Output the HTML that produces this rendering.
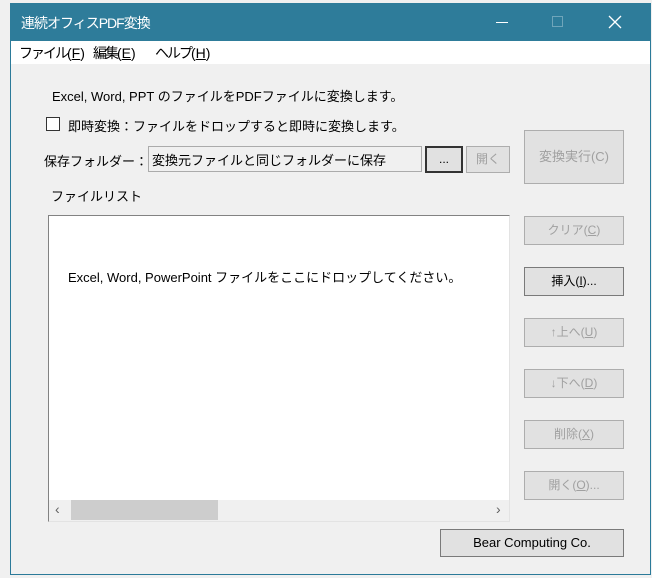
<!DOCTYPE html>
<html><head><meta charset="utf-8"><style>
*{box-sizing:border-box;margin:0;padding:0}
body{width:652px;height:578px;background:#f0f0f0;position:relative;overflow:hidden;font-family:"Liberation Sans","Noto Sans CJK JP",sans-serif;font-size:13px;color:#000}
.a{position:absolute;white-space:nowrap}
.win{position:absolute;left:10px;top:3px;width:641px;height:572px;border:1px solid #2b7a99;background:#f0f0f0}
.title{position:absolute;left:10px;top:3px;width:641px;height:38px;background:#2e7c9a;color:#fff;font-size:14px}
.menu{position:absolute;left:11px;top:41px;width:639px;height:23px;background:#fff;font-size:14px}
.menu i{font-style:normal;letter-spacing:-2px}
.btn{position:absolute;background:#e1e1e1;border:1px solid #adadad;text-align:center;color:#a0a0a0;font-size:12px}
.en{color:#000;border-color:#7a7a7a}
</style></head><body>
<div class="win"></div>
<div class="title">
 <div class="a" style="left:11px;top:10px;letter-spacing:-1px">連続オフィスPDF変換</div>
 <div class="a" style="left:486px;top:19px;width:12px;height:1px;background:#fff"></div>
 <div class="a" style="left:542px;top:13px;width:11px;height:11px;border:1px solid #6fa5ba"></div>
 <svg class="a" style="left:598px;top:12px" width="14" height="14"><path d="M1 1L13 13M13 1L1 13" stroke="#fff" stroke-width="1.3"/></svg>
</div>
<div class="menu">
 <span class="a" style="left:8px;top:2px"><i>ファイル</i>(<u>F</u>)</span>
 <span class="a" style="left:82px;top:2px"><i>編集</i>(<u>E</u>)</span>
 <span class="a" style="left:144px;top:2px"><i>ヘルプ</i>(<u>H</u>)</span>
</div>
<div class="a" style="left:52px;top:86px">Excel, Word, PPT のファイルをPDFファイルに変換します。</div>
<div class="a" style="left:46px;top:117px;width:14px;height:14px;background:#fff;border:1px solid #333"></div>
<div class="a" style="left:68px;top:116px">即時変換：ファイルをドロップすると即時に変換します。</div>
<div class="a" style="left:44px;top:151px">保存フォルダー：</div>
<div class="a" style="left:148px;top:146px;width:274px;height:26px;border:1px solid #ababab;background:#f0f0f0;padding:3px 3px;font-size:13px">変換元ファイルと同じフォルダーに保存</div>
<div class="btn en" style="left:425px;top:146px;width:38px;height:27px;border:2px solid #333;line-height:22px">...</div>
<div class="btn" style="left:466px;top:146px;width:44px;height:27px;line-height:25px">開く</div>
<div class="btn" style="left:524px;top:130px;width:100px;height:54px;line-height:52px;font-size:13px">変換実行(C)</div>
<div class="a" style="left:51px;top:186px">ファイルリスト</div>
<div class="a" style="left:48px;top:215px;width:462px;height:307px;border:1px solid #828282;border-right-color:#e3e3e3;border-bottom-color:#e3e3e3;background:#fff"></div>
<div class="a" style="left:68px;top:267px">Excel, Word, PowerPoint ファイルをここにドロップしてください。</div>
<div class="a" style="left:49px;top:500px;width:460px;height:21px;background:#f0f0f0"></div>
<div class="a" style="left:71px;top:500px;width:147px;height:20px;background:#cdcdcd"></div>
<div class="a" style="left:55px;top:501px;color:#606060;font-size:14px">‹</div>
<div class="a" style="left:496px;top:501px;color:#606060;font-size:14px">›</div>
<div class="btn" style="left:524px;top:216px;width:100px;height:29px;line-height:27px">クリア(<u>C</u>)</div>
<div class="btn en" style="left:524px;top:267px;width:100px;height:29px;line-height:27px">挿入(<u>I</u>)...</div>
<div class="btn" style="left:524px;top:318px;width:100px;height:29px;line-height:27px">↑上へ(<u>U</u>)</div>
<div class="btn" style="left:524px;top:369px;width:100px;height:29px;line-height:27px">↓下へ(<u>D</u>)</div>
<div class="btn" style="left:524px;top:420px;width:100px;height:29px;line-height:27px">削除(<u>X</u>)</div>
<div class="btn" style="left:524px;top:471px;width:100px;height:29px;line-height:27px">開く(<u>O</u>)...</div>
<div class="btn en" style="left:440px;top:529px;width:184px;height:28px;line-height:26px;font-size:13px">Bear Computing Co.</div>
</body></html>
